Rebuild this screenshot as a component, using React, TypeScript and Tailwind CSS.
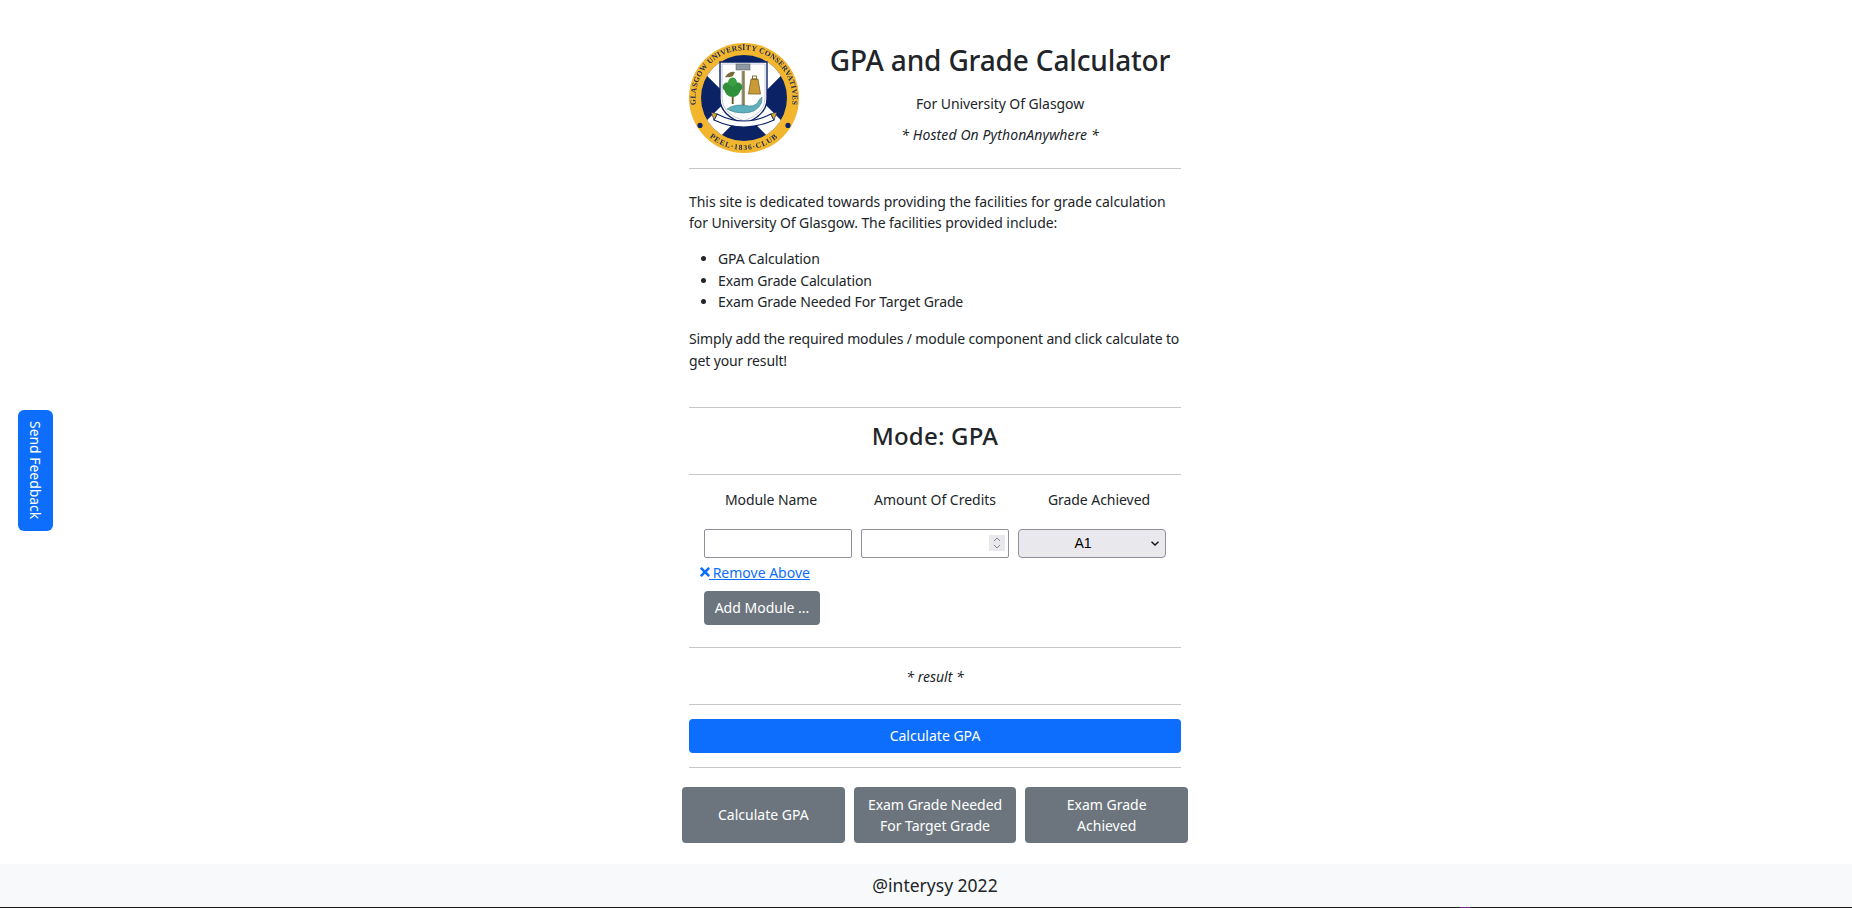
import React from 'react';
import { FaTimes } from 'react-icons/fa';

// *** Logo ***
const Logo = () => (
  <svg width={110} height={110} viewBox="0 0 110 110" className="block shrink-0 blur-[0.4px]">
    <defs>
      <clipPath id="field">
        <circle cx="55" cy="55" r="43" />
      </clipPath>
      <path id="topArc" d="M 12 78 A 48.5 48.5 0 1 1 98 78" />
      <path id="bottomArc" d="M 15 88.2 A 52 52 0 0 0 95 88.2" />
    </defs>
    <circle cx="55" cy="55" r="55" fill="#f1b52e" />
    <circle cx="55" cy="55" r="43" fill="#0b2265" />
    <g clipPath="url(#field)">
      <path d="M14 14 L96 96 M96 14 L14 96" stroke="#fff" strokeWidth="21" />
    </g>
    <circle cx="11" cy="82.4" r="2.6" fill="#0b2265" />
    <circle cx="99" cy="82.4" r="2.6" fill="#0b2265" />
    <text fontFamily="'Liberation Serif', serif" fontWeight="700" fontSize="7.6" fill="#1a2a55" letterSpacing="0.3">
      <textPath href="#topArc" startOffset="50%" textAnchor="middle">GLASGOW UNIVERSITY CONSERVATIVES</textPath>
    </text>
    <text fontFamily="'Liberation Serif', serif" fontWeight="700" fontSize="7.6" fill="#1a2a55" letterSpacing="1">
      <textPath href="#bottomArc" startOffset="50%" textAnchor="middle">PEEL·1836·CLUB</textPath>
    </text>
    {/* shield */}
    <path d="M31 19 H78 V56 Q78 72 55 81 Q31 72 31 56 Z" fill="#fff" stroke="#0b2265" strokeWidth="1.4" />
    <path d="M33 21 H76 V56 Q76 70 55 78 Q33 70 33 56 Z" fill="#fff" stroke="#8b93b5" strokeWidth="0.5" />
    {/* book */}
    <rect x="47" y="21" width="14" height="6" fill="#8e9aa3" stroke="#555" strokeWidth="0.5" />
    {/* pillar */}
    <rect x="52.6" y="28" width="3.4" height="42" fill="#b59a57" />
    <rect x="53.6" y="28" width="1.2" height="42" fill="#6a7a86" />
    {/* bird */}
    <path d="M36 34 Q40 28 46 29 L44 33 Q40 35 36 34 Z" fill="#7a6a3a" />
    {/* tree */}
    <rect x="42.8" y="50" width="1.8" height="11" fill="#6b4b22" />
    <circle cx="43.5" cy="46" r="8" fill="#2f8f3a" />
    <circle cx="38" cy="44" r="4.4" fill="#2f8f3a" />
    <circle cx="49" cy="44" r="4.4" fill="#2f8f3a" />
    <circle cx="43.5" cy="39" r="4.4" fill="#3aa043" />
    {/* bell */}
    <path d="M62 36 H69 L71.5 51 H59.5 Z" fill="#c99a35" stroke="#6f5317" strokeWidth="0.7" />
    <rect x="63.5" y="33" width="4" height="3" fill="none" stroke="#6f5317" strokeWidth="0.8" />
    {/* fish */}
    <path d="M38 66 Q46 60 60 63 Q68 63 70 57 L73 54 L72.5 60 Q68 70 54 70 Q44 70 38 66 Z" fill="#5fb0bd" stroke="#2d6f7c" strokeWidth="0.5" />
    {/* banner */}
    <path d="M28 71 Q55 85 82 71 L85 77 Q55 91 25 77 Z" fill="#fff" stroke="#0b2265" strokeWidth="1.2" />
    <path d="M25 77 L22 69 L28 71 Z M85 77 L88 69 L82 71 Z" fill="#d9a92e" stroke="#0b2265" strokeWidth="0.6" />
  </svg>
);

const Rule = ({ className = '' }: { className?: string }) => (
  <hr className={`border-0 border-t border-[#c6c7c8] ${className}`} />
);

export default function App() {
  return (
    <div className="relative flex h-[908px] flex-col overflow-hidden bg-white font-['Noto_Sans','Open_Sans',sans-serif] text-[14px] leading-[21px] text-[#212529]">
      {/* Feedback tab */}
      <button className="absolute left-[18px] top-[410px] flex h-[121px] w-[35px] items-center justify-center rounded-[6px] bg-[#0d6efd] tracking-[-0.05px] text-white [writing-mode:vertical-rl]">
        Send Feedback
      </button>

      <div className="flex flex-1 justify-center pl-[18px]">
        <main className="flex w-[492px] flex-col pt-[43px]">
          {/* Header */}
          <div className="flex h-[110px]">
            <Logo />
            <div className="ml-[20px] flex flex-1 flex-col items-center">
              <h1 className="mt-[-2px] h-[38px] text-[28px] font-medium leading-[38px] tracking-[-0.15px]">GPA and Grade Calculator</h1>
              <p className="mt-[14px] tracking-[-0.08px]">For University Of Glasgow</p>
              <p className="mt-[10px] italic tracking-[0.1px]">* Hosted On PythonAnywhere *</p>
            </div>
          </div>
          <Rule className="mt-[15px]" />

          {/* Intro */}
          <p className="mt-[22px] whitespace-nowrap">
            <span className="tracking-[-0.05px]">This site is dedicated towards providing the facilities for grade calculation</span>
            <br />
            <span className="tracking-[-0.08px]">for University Of Glasgow. The facilities provided include:</span>
          </p>
          <ul className="mt-[15px] list-disc pl-[29px] leading-[21.5px] tracking-[-0.12px]">
            <li>GPA Calculation</li>
            <li>Exam Grade Calculation</li>
            <li>Exam Grade Needed For Target Grade</li>
          </ul>
          <p className="mt-[15px] leading-[22px] tracking-[-0.13px]">
            Simply add the required modules / module component and click calculate to get your result!
          </p>
          <Rule className="mt-[35px]" />

          <h2 className="mb-[17px] mt-[7px] text-center text-[24px] font-medium leading-[42px] tracking-[0.2px]">Mode: GPA</h2>
          <Rule />

          {/* Module form */}
          <div className="mt-[14px] flex flex-col px-[15px]">
            <div className="mx-[-15px] grid grid-cols-3 text-center">
              <span className="tracking-[-0.1px]">Module Name</span>
              <span>Amount Of Credits</span>
              <span className="tracking-[-0.05px]">Grade Achieved</span>
            </div>
            <div className="mt-[19px] grid grid-cols-3 gap-[9px]">
              <input type="text" className="h-[29px] w-full rounded-[2px] border border-[#8f8f9d] bg-white px-2" />
              <div className="relative">
                <input type="number" className="h-[29px] w-full rounded-[2px] border border-[#8f8f9d] bg-white px-2 [appearance:textfield] [&::-webkit-inner-spin-button]:appearance-none" />
                {/* spinner */}
                <span className="absolute right-[4px] top-[6px] flex h-[16px] w-[16px] items-center justify-center bg-[#e9e9ed]">
                  <svg width="8" height="12" viewBox="0 0 8 12" fill="none" stroke="#7a7a7a" strokeWidth="0.9">
                    <path d="M1 4 L4 1 L7 4 M1 8 L4 11 L7 8" />
                  </svg>
                </span>
              </div>
              <div className="relative">
                <select className="h-[29px] w-full appearance-none rounded-[4px] border border-[#8f8f9d] bg-[#e9e9ed] pr-[18px] text-center font-['Liberation_Sans',sans-serif] text-[14px] text-black">
                  <option>A1</option>
                </select>
                <svg className="pointer-events-none absolute right-[7px] top-[12px]" width="8" height="5" viewBox="0 0 8 5" fill="none" stroke="#111" strokeWidth="1.4">
                  <path d="M0.5 0.8 L4 4 L7.5 0.8" />
                </svg>
              </div>
            </div>
            <a href="#" className="ml-[-6px] mt-[4px] flex w-fit items-center text-[#0d6efd]">
              <FaTimes size={14} className="mr-[-3px]" />
              <span className="underline">&nbsp;Remove Above</span>
            </a>
            <button className="mt-[8px] h-[34px] w-[116px] rounded-[4px] bg-[#6c757d] text-white">Add Module ...</button>
          </div>
          <Rule className="mt-[22px]" />

          <p className="pb-[17px] pt-[18px] text-center italic">* result *</p>
          <Rule />

          <button className="mt-[14px] h-[34px] w-full rounded-[4px] bg-[#0d6efd] text-white">Calculate GPA</button>
          <Rule className="mt-[14px]" />

          {/* Mode switcher */}
          <div className="mx-[-7px] mt-[19px] grid grid-cols-3 gap-[9px]">
            <button className="h-[56px] rounded-[4px] bg-[#6c757d] text-white">Calculate GPA</button>
            <button className="h-[56px] rounded-[4px] bg-[#6c757d] px-3 tracking-[-0.05px] text-white">Exam Grade Needed For Target Grade</button>
            <button className="h-[56px] rounded-[4px] bg-[#6c757d] px-8 text-white">Exam Grade Achieved</button>
          </div>
        </main>
      </div>

      {/* Footer */}
      <footer className="flex h-[43px] items-center justify-center bg-[#f8f9fa] pl-[18px] text-[17.5px] text-[#212529]">
        @interysy 2022
      </footer>
      <div className="relative h-px bg-[#1a1a1a]">
        <span className="absolute left-[1460px] top-0 h-px w-[10px] bg-[#7a1fa2]" />
      </div>
    </div>
  );
}
